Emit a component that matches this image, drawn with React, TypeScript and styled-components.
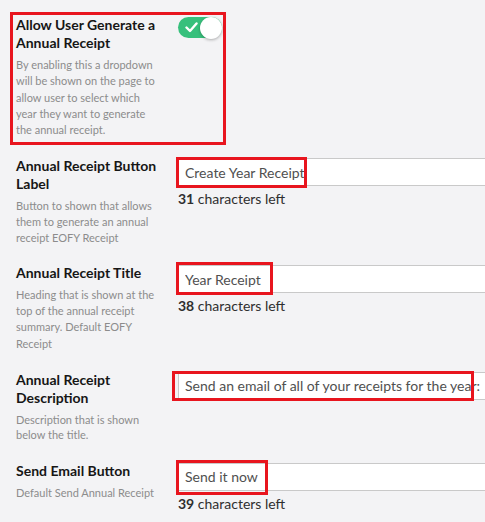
import React from "react";
import styled, { createGlobalStyle } from "styled-components";

const Global = createGlobalStyle`
  html, body { margin: 0; padding: 0; background: #f3f3f5; }
  body { font-family: Lato, "Open Sans", sans-serif; overflow: hidden; }
  * { box-sizing: border-box; }
`;

const Page = styled.div`
  padding: 16px 0 0 16px;
  display: flex;
  flex-direction: column;
  gap: 19px;
  overflow: hidden;
  width: 485px;
  height: 522px;
`;

const Row = styled.div<{ $boxed?: boolean }>`
  position: relative;
  display: grid;
  grid-template-columns: 145px 1fr;
  column-gap: 17px;
  align-items: start;
  ${(p) => (p.$boxed ? "width: 206px; padding-bottom: 2px; margin-bottom: -2px;" : "")}
`;

const Frame = styled.div`
  position: absolute;
  left: -6px;
  top: -4px;
  right: -4px;
  bottom: -5px;
  border: 3px solid #e8151e;
  pointer-events: none;
`;

const Info = styled.div`
  display: flex;
  flex-direction: column;
  gap: 5px;
`;

const Title = styled.div`
  font-size: 14px;
  line-height: 18px;
  font-weight: 700;
  color: #161616;
`;

const Desc = styled.div<{ $lh?: number }>`
  font-size: 11px;
  line-height: ${(p) => p.$lh ?? 15.6}px;
  color: #8c8c8c;
`;

const Field = styled.div`
  display: flex;
  flex-direction: column;
  gap: 5px;
  padding-top: 1px;
  min-width: 0;
`;

const InputWrap = styled.div`
  position: relative;
  margin-right: -40px;
`;

const TextInput = styled.input`
  display: block;
  width: 100%;
  height: 28px;
  border: 1px solid #c9c9c9;
  background: #fff;
  padding: 0 0 0 6px;
  font-family: Lato, "Open Sans", sans-serif;
  font-size: 14px;
  color: #505050;
  outline: none;
`;

const Highlight = styled.span<{ $w: number; $l?: number; $t?: number; $h?: number }>`
  position: absolute;
  left: ${(p) => p.$l ?? -2}px;
  top: ${(p) => p.$t ?? -1}px;
  width: ${(p) => p.$w}px;
  height: ${(p) => p.$h ?? 31}px;
  border: 3px solid #e8151e;
  pointer-events: none;
`;

const Counter = styled.div`
  font-size: 14px;
  line-height: 16px;
  color: #2f2f2f;
  b { font-weight: 700; }
`;

const Switch = styled.div`
  position: relative;
  width: 44px;
  height: 21px;
  border-radius: 11px;
  background: #37c07c;
`;

const Knob = styled.span`
  position: absolute;
  right: 0;
  top: -0.5px;
  width: 22px;
  height: 22px;
  border-radius: 50%;
  background: #fff;
  box-shadow: 0 1px 3px rgba(0, 0, 0, 0.3);
`;

const Check = styled.svg`
  position: absolute;
  left: 7px;
  top: 5px;
`;

type FieldRow = {
  title: string;
  desc: string;
  value: string;
  left?: number;
  lh?: number;
  hl: { w: number; l?: number; t?: number; h?: number };
};

const rows: FieldRow[] = [
  {
    title: "Annual Receipt Button Label",
    desc: "Button to shown that allows them to generate an annual receipt EOFY Receipt",
    value: "Create Year Receipt",
    left: 31,
    hl: { w: 131 },
  },
  {
    title: "Annual Receipt Title",
    desc: "Heading that is shown at the top of the annual receipt summary. Default EOFY Receipt",
    value: "Year Receipt",
    left: 38,
    lh: 16.1,
    hl: { w: 97, t: -3, h: 33 },
  },
  {
    title: "Annual Receipt Description",
    desc: "Description that is shown below the title.",
    value: "Send an email of all of your receipts for the year:",
    hl: { w: 302, l: -6, t: -1, h: 30 },
  },
  {
    title: "Send Email Button",
    desc: "Default Send Annual Receipt",
    value: "Send it now",
    left: 39,
    hl: { w: 92, t: -3, h: 35 },
  },
];

export default function App() {
  return (
    <>
      <Global />
      <Page>
        <Row $boxed>
          <Frame />
          <Info>
            <Title>Allow User Generate a Annual Receipt</Title>
            <Desc $lh={16.3}>
              By enabling this a dropdown will be shown on the page to allow user to select which
              year they want to generate the annual receipt.
            </Desc>
          </Info>
          <Field>
            <Switch>
              <Check width="13" height="11" viewBox="0 0 13 11">
                <path d="M1.5 5.5 L5 9 L11.5 1.5" fill="none" stroke="#fff" strokeWidth="2.4" strokeLinecap="round" strokeLinejoin="round" />
              </Check>
              <Knob />
            </Switch>
          </Field>
        </Row>
        {rows.map((r) => (
          <Row key={r.title}>
            <Info>
              <Title>{r.title}</Title>
              <Desc $lh={r.lh}>{r.desc}</Desc>
            </Info>
            <Field>
              <InputWrap>
                <TextInput defaultValue={r.value} readOnly />
                <Highlight $w={r.hl.w} $l={r.hl.l} $t={r.hl.t} $h={r.hl.h} />
              </InputWrap>
              {r.left !== undefined && (
                <Counter>
                  <b>{r.left}</b> characters left
                </Counter>
              )}
            </Field>
          </Row>
        ))}
      </Page>
    </>
  );
}
